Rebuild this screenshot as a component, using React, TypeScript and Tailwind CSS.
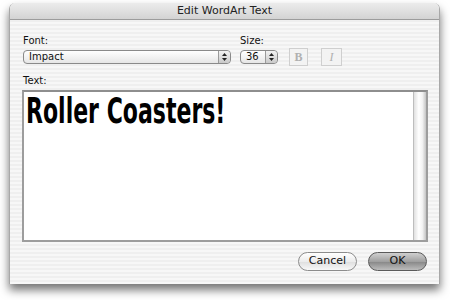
import React from "react";

const ui = { fontFamily: '"DejaVu Sans", "Liberation Sans", sans-serif' };

function Stepper() {
  return (
    <div className="flex h-full w-[12px] flex-col items-center justify-center gap-[2px] rounded-r-[4px] border-l border-[#9a9a9a] bg-[linear-gradient(180deg,#f2f2f2,#c9c9c9)]">
      <svg width="5" height="3" viewBox="0 0 5 3"><path d="M2.5 0L5 3H0z" fill="#222" /></svg>
      <svg width="5" height="3" viewBox="0 0 5 3"><path d="M0 0H5L2.5 3z" fill="#222" /></svg>
    </div>
  );
}

export default function App() {
  return (
    <div className="h-[300px] w-[450px] overflow-hidden bg-white" style={ui}>
      <div className="ml-[9px] mt-[3px] flex h-[281px] w-[431px] flex-col overflow-hidden rounded-t-[6px] border-x border-[#a8a8a8] shadow-[0_6px_10px_rgba(0,0,0,0.55)]">
        {/* title bar */}
        <div className="flex h-[17px] shrink-0 items-center justify-center border-b border-[#9c9c9c] bg-[linear-gradient(180deg,#ececec,#d3d3d3)] text-[11px] text-[#222]">
          Edit WordArt Text
        </div>
        {/* body */}
        <div className="flex flex-1 flex-col bg-[repeating-linear-gradient(180deg,#efefef_0px,#efefef_2px,#f7f7f7_2px,#f7f7f7_4px)] px-[12px] pt-[14px] text-[10px] text-[#111]">
          <div className="flex items-end pl-[1px]">
            <div className="flex w-[208px] flex-col">
              <div className="h-[13px] leading-[13px]">Font:</div>
              <div className="mt-[3px] flex h-[14px] items-center rounded-[4px] border border-[#8a8a8a] bg-[linear-gradient(180deg,#ffffff,#e6e6e6)]">
                <span className="flex-1 pl-[5px] leading-[12px]">Impact</span>
                <Stepper />
              </div>
            </div>
            <div className="ml-[9px] flex w-[38px] flex-col">
              <div className="h-[13px] leading-[13px]">Size:</div>
              <div className="mt-[3px] flex h-[14px] items-center rounded-[4px] border border-[#8a8a8a] bg-[linear-gradient(180deg,#ffffff,#e6e6e6)]">
                <span className="flex-1 pl-[5px] leading-[12px]">36</span>
                <Stepper />
              </div>
            </div>
            <div className="mb-[-2px] ml-[11px] flex h-[18px] w-[19px] items-center justify-center border border-[#cfcfcf] bg-[#f3f3f3] text-[12px] font-bold text-[#b0b0b0]" style={{ fontFamily: '"Liberation Serif", serif' }}>
              B
            </div>
            <div className="mb-[-2px] ml-[13px] flex h-[18px] w-[21px] items-center justify-center border border-[#cfcfcf] bg-[#f3f3f3] text-[12px] italic text-[#b0b0b0]" style={{ fontFamily: '"Liberation Serif", serif' }}>
              I
            </div>
          </div>
          <div className="mt-[10px] h-[13px] pl-[1px] leading-[13px]">Text:</div>
          <div className="mt-[3px] flex h-[152px] w-[406px] border-2 border-[#9d9d9d] border-t-[#8e8e8e] bg-white">
            <div className="flex-1 pl-[2px] pt-[1px]">
              <div className="h-[36px] w-[200px]">
                <span
                  className="inline-block origin-top-left scale-x-[0.68] whitespace-nowrap text-[36px] font-bold leading-[36px] text-black"
                  style={{ fontFamily: 'Impact, "DejaVu Sans Condensed", "DejaVu Sans", sans-serif' }}
                >
                  Roller Coasters!
                </span>
              </div>
            </div>
            <div className="w-[13px] border-l border-[#bdbdbd] bg-[linear-gradient(90deg,#e0e0e0,#ffffff_40%,#f2f2f2_70%,#c4c4c4)]" />
          </div>
          <div className="mt-[10px] flex justify-end gap-[11px]">
            <div className="flex h-[19px] w-[59px] items-center justify-center rounded-full border border-[#8c8c8c] bg-[linear-gradient(180deg,#ffffff,#ececec_50%,#dedede_51%,#f8f8f8)] text-[11px] text-[#111]">
              Cancel
            </div>
            <div className="flex h-[19px] w-[59px] items-center justify-center rounded-full border border-[#5a5a5a] bg-[linear-gradient(180deg,#d0d0d0,#a0a0a0_50%,#868686_51%,#bcbcbc)] text-[11px] text-[#111]">
              OK
            </div>
          </div>
        </div>
      </div>
    </div>
  );
}
